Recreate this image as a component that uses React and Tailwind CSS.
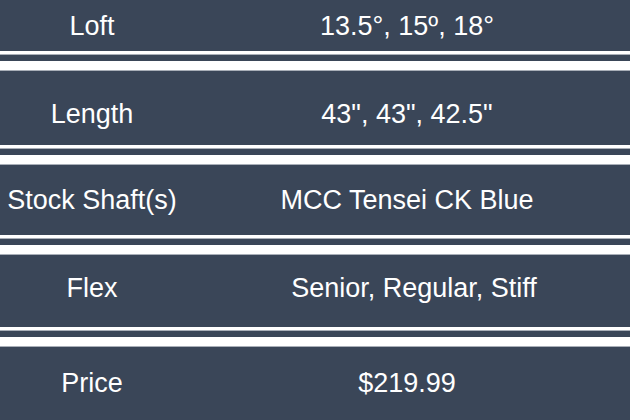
import React from 'react';

const ROWS = [
  { label: 'Loft', value: '13.5°, 15º, 18°', h: 'h-[51px]', pt: 'pt-[13px]' },
  { label: 'Length', value: '43", 43", 42.5"', h: 'h-[74px]', pt: 'pt-[30px]' },
  { label: 'Stock Shaft(s)', value: 'MCC Tensei CK Blue', h: 'h-[70px]', pt: 'pt-[22px]' },
  { label: 'Flex', value: 'Senior, Regular, Stiff', h: 'h-[72px]', pt: 'pt-[20px]', shift: 'pl-[14px]' },
  { label: 'Price', value: '$219.99', h: 'h-[72px]', pt: 'pt-[23px]' },
];

// Double rule between rows: thin white, dark gap, thick white.
const Divider = () => (
  <div className="flex flex-col">
    <div className="h-[3px] bg-white" />
    <div className="h-px bg-[#a9afb8]" />
    <div className="h-[6px] bg-[#3a4658]" />
    <div className="h-[9px] bg-white" />
    <div className="h-px bg-[#a9afb8]" />
  </div>
);

export default function App() {
  return (
    <div
      className="w-[630px] h-[420px] overflow-hidden bg-[#3a4658] text-white text-[27px] leading-[27px]"
      style={{ fontFamily: '"Liberation Sans", Arial, sans-serif' }}
    >
      {ROWS.map((r, i) => (
        <React.Fragment key={r.label}>
          {i > 0 && <Divider />}
          <div className={`flex bg-[#3a4658] ${r.h} ${r.pt}`}>
            <div className="w-[184px] text-center whitespace-nowrap">{r.label}</div>
            <div className={`flex-1 text-center whitespace-nowrap ${r.shift || ''}`}>{r.value}</div>
          </div>
        </React.Fragment>
      ))}
    </div>
  );
}
